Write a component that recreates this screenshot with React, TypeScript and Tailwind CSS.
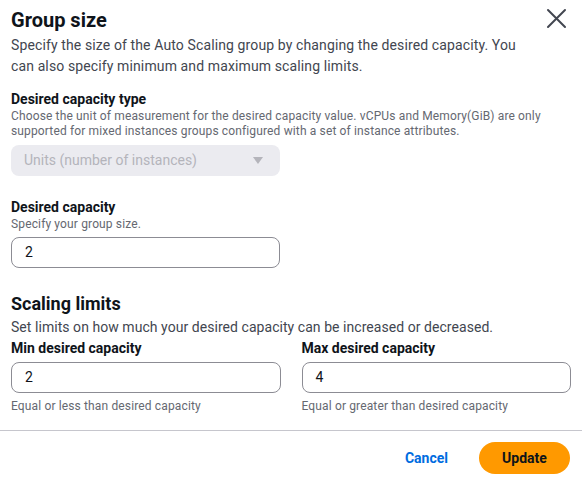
import React from "react";

const font = { fontFamily: 'Roboto, "Open Sans", sans-serif' };

function Field({ value }: { value: string }) {
  return (
    <div className="h-[31px] w-full rounded-[8px] border border-[#8c8c94] bg-white px-[13px] flex items-center text-[14px] text-[#0f141a]">
      {value}
    </div>
  );
}

export default function App() {
  return (
    <div className="w-[582px] h-[482px] bg-white relative overflow-hidden" style={font}>
      <div className="px-[11px] pt-[7px]">
        <div className="flex items-start justify-between">
          <h1 className="text-[20px] font-bold leading-[26px] text-[#0f141a]">Group size</h1>
          <button className="mt-[1px] mr-[4px] text-[#424650]" aria-label="Close">
            <svg width="21" height="21" viewBox="0 0 21 21" fill="none">
              <path d="M2 2L19 19M19 2L2 19" stroke="currentColor" strokeWidth="2" strokeLinecap="round" />
            </svg>
          </button>
        </div>
        <p className="mt-[2px] text-[14px] leading-[21px] tracking-[0.12px] text-[#424650] w-[530px]">
          Specify the size of the Auto Scaling group by changing the desired capacity. You can also specify minimum and maximum scaling limits.
        </p>

        <div className="mt-[13px]">
          <div className="text-[14px] font-bold leading-[18px] text-[#0f141a]">Desired capacity type</div>
          <p className="mt-[1px] text-[12px] leading-[15px] tracking-[0.14px] text-[#656871]">
            Choose the unit of measurement for the desired capacity value. vCPUs and Memory(GiB) are only supported for mixed instances groups configured with a set of instance attributes.
          </p>
          <div className="mt-[6px] h-[31px] w-[269px] rounded-[8px] bg-[#ebebf0] px-[13px] flex items-center justify-between text-[14px] text-[#b4b4bb]">
            <span>Units (number of instances)</span>
            <svg width="12" height="10" viewBox="0 0 12 10" className="mr-[3px]">
              <path d="M1 1H11L6 8Z" fill="#b4b4bb" />
            </svg>
          </div>
        </div>

        <div className="mt-[22px] w-[269px]">
          <div className="text-[14px] font-bold leading-[18px] text-[#0f141a]">Desired capacity</div>
          <p className="mt-[1px] text-[12px] leading-[15px] tracking-[0.14px] text-[#656871]">Specify your group size.</p>
          <div className="mt-[5px]">
            <Field value="2" />
          </div>
        </div>

        <h2 className="mt-[25px] text-[18px] font-bold leading-[22px] text-[#0f141a]">Scaling limits</h2>
        <p className="mt-[2px] text-[14px] leading-[20px] tracking-[0.05px] text-[#424650]">
          Set limits on how much your desired capacity can be increased or decreased.
        </p>
        <div className="grid grid-cols-2 gap-x-[21px]">
          <div>
            <div className="mt-[1px] text-[14px] font-bold leading-[20px] text-[#0f141a]">Min desired capacity</div>
            <div className="mt-[4px]"><Field value="2" /></div>
            <div className="mt-[5px] text-[12px] leading-[16px] tracking-[0.14px] text-[#656871]">Equal or less than desired capacity</div>
          </div>
          <div>
            <div className="mt-[1px] text-[14px] font-bold leading-[20px] text-[#0f141a]">Max desired capacity</div>
            <div className="mt-[4px]"><Field value="4" /></div>
            <div className="mt-[5px] text-[12px] leading-[16px] tracking-[0.14px] text-[#656871]">Equal or greater than desired capacity</div>
          </div>
        </div>
      </div>
      <div className="mt-[16px] border-t border-[#c6c6cd]" />
      <div className="flex items-center justify-end gap-[31px] px-[12px] pt-[11px]">
        <button className="text-[14px] font-bold text-[#006ce0]">Cancel</button>
        <button className="h-[32px] w-[91px] rounded-full bg-[#ff9900] text-[14px] font-bold text-[#0f141a]">Update</button>
      </div>
    </div>
  );
}
